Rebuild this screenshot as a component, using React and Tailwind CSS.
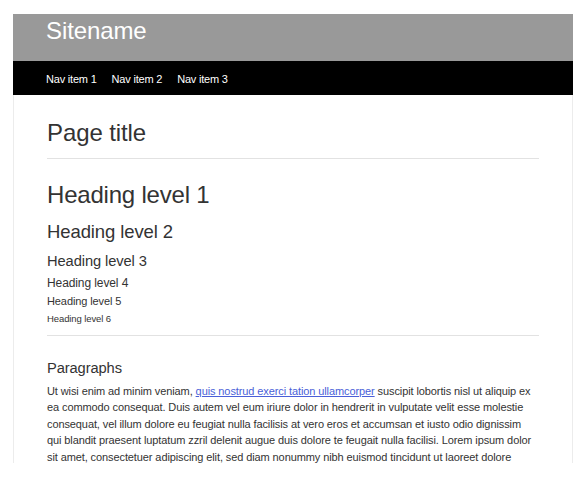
export default function App() {
  return (
    <div className="w-[585px] h-[490px] bg-white overflow-hidden" style={{ fontFamily: '"Liberation Sans", Arial, Helvetica, sans-serif' }}>
      <div className="ml-[13px] mt-[14px] w-[560px] h-[449px] overflow-hidden flex flex-col">
        <header className="h-[47px] bg-[#999999] pl-[33px] pt-[3px] shrink-0">
          <div className="text-[24px] leading-[28px] text-white tracking-[-0.1px]">Sitename</div>
        </header>
        <nav className="h-[34px] bg-black pl-[33px] pt-[11px] shrink-0 flex gap-[15px] text-[11px] leading-[15px] text-white tracking-[-0.2px]">
          <a href="#">Nav item 1</a>
          <a href="#">Nav item 2</a>
          <a href="#">Nav item 3</a>
        </nav>
        <main className="flex-1 border-x border-[#ececec] px-[33px] pt-[24px] text-[#333]">
          <h1 className="text-[24px] leading-[28px] tracking-[-0.1px]">Page title</h1>
          <hr className="mt-[11px] border-0 border-t border-[#e2e2e2]" />
          <h1 className="mt-[22px] text-[24px] leading-[28px] tracking-[-0.2px]">Heading level 1</h1>
          <h2 className="mt-[11px] text-[18.5px] leading-[24px] tracking-[-0.1px]">Heading level 2</h2>
          <h3 className="mt-[7px] text-[14.7px] leading-[20px] tracking-[-0.1px]">Heading level 3</h3>
          <h4 className="mt-[4px] text-[12px] leading-[16px] tracking-[-0.1px]">Heading level 4</h4>
          <h5 className="mt-[3px] text-[11px] leading-[14px] tracking-[-0.1px]">Heading level 5</h5>
          <h6 className="mt-[4px] text-[9.5px] leading-[13px] tracking-[-0.1px]">Heading level 6</h6>
          <hr className="mt-[10px] border-0 border-t border-[#e2e2e2]" />
          <h3 className="mt-[22px] text-[14.7px] leading-[20px] tracking-[-0.1px]">Paragraphs</h3>
          <p className="mt-[5px] text-[11px] leading-[16.4px] tracking-[-0.1px]">
            Ut wisi enim ad minim veniam, <a href="#" className="text-[#4a5fd8] underline">quis nostrud exerci tation ullamcorper</a> suscipit lobortis nisl ut aliquip ex<br />
            ea commodo consequat. Duis autem vel eum iriure dolor in hendrerit in vulputate velit esse molestie<br />
            consequat, vel illum dolore eu feugiat nulla facilisis at vero eros et accumsan et iusto odio dignissim<br />
            qui blandit praesent luptatum zzril delenit augue duis dolore te feugait nulla facilisi. Lorem ipsum dolor<br />
            sit amet, consectetuer adipiscing elit, sed diam nonummy nibh euismod tincidunt ut laoreet dolore<br />
            magna aliquam erat volutpat.
          </p>
        </main>
      </div>
    </div>
  );
}
